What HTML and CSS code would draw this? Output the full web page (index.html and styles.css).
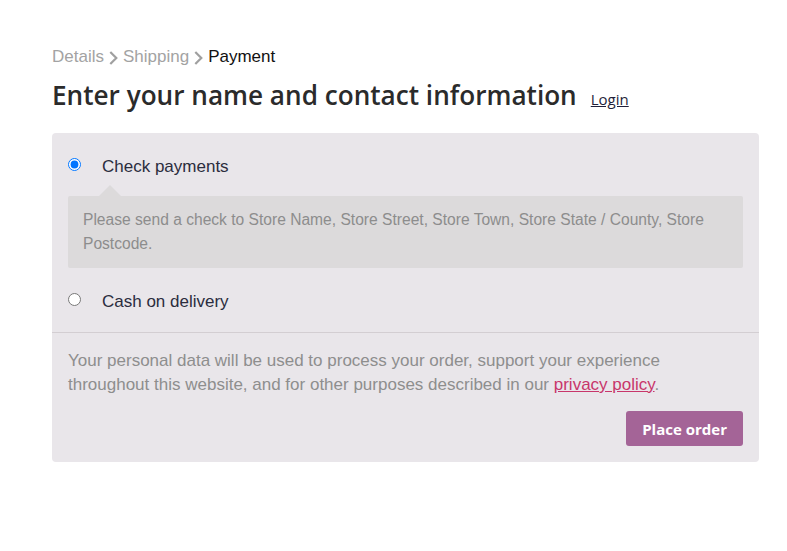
FILE: index.html
```html
<!DOCTYPE html>
<html>
<head>
<meta charset="utf-8">
<link rel="stylesheet" href="styles.css">
</head>
<body>
<div class="page">
  <nav class="crumbs">
    <span class="crumb">Details</span>
    <svg class="chev" viewBox="0 0 9 14" width="9" height="14"><path d="M1.3 1 L7.3 7 L1.3 13" fill="none" stroke="#a0a0a0" stroke-width="2.2"/></svg>
    <span class="crumb">Shipping</span>
    <svg class="chev" viewBox="0 0 9 14" width="9" height="14"><path d="M1.3 1 L7.3 7 L1.3 13" fill="none" stroke="#a0a0a0" stroke-width="2.2"/></svg>
    <span class="crumb current">Payment</span>
  </nav>
  <div class="title-row">
    <h1>Enter your name and contact information</h1>
    <a class="login" href="#">Login</a>
  </div>
  <div class="panel">
    <ul class="methods">
      <li class="method">
        <label class="method-label"><input type="radio" name="pm" checked><span>Check payments</span></label>
        <div class="desc">Please send a check to Store Name, Store Street, Store Town, Store State / County, Store Postcode.</div>
      </li>
      <li class="method">
        <label class="method-label"><input type="radio" name="pm"><span>Cash on delivery</span></label>
      </li>
    </ul>
    <div class="place">
      <p class="privacy">Your personal data will be used to process your order, support your experience throughout this website, and for other purposes described in our <a href="#">privacy policy</a>.</p>
      <div class="actions"><button class="btn">Place order</button></div>
    </div>
  </div>
</div>
</body>
</html>
```
FILE: styles.css
```css
* { box-sizing: border-box; }
body { margin: 0; background: #fff; font-family: "Liberation Sans", Arial, sans-serif; }
.page { padding: 45px 28px 0 52px; }
.crumbs { display: flex; align-items: center; gap: 5px; font-size: 17px; line-height: 24px; color: #a3a3a3; }
.crumbs .current { color: #111; }
.chev { display: block; margin-top: 1px; }
.title-row { display: flex; align-items: baseline; gap: 14px; margin-top: 6px; }
h1 { margin: 0; font-family: "Open Sans", "Noto Sans", sans-serif; font-weight: 600; font-size: 26.15px; line-height: 40px; color: #2b2b2b; letter-spacing: 0; }
.login { font-family: "Open Sans", "Noto Sans", sans-serif; font-size: 15px; color: #1f1f3a; text-decoration: underline; }
.panel { margin-top: 18px; width: 707px; background: #e9e6ea; border-radius: 4px; }
.methods { list-style: none; margin: 0; padding: 0 16px; border-bottom: 1px solid #d3ced2; }
.method { padding-top: 22px; }
.method + .method { padding-top: 22px; padding-bottom: 18px; }
.method-label { display: flex; align-items: flex-start; font-size: 17px; line-height: 24px; color: #2b2d3e; }
.method-label input { margin: 3px 21px 0 0; width: 13px; height: 13px; flex: none; }
.desc { position: relative; margin-top: 17px; background: #dcdadb; border-radius: 2px; padding: 12px 15px; font-size: 15.6px; line-height: 24px; color: #8d8d8d; }
.desc::before { content: ""; position: absolute; left: 31px; top: -11px; border: 11px solid transparent; border-top: 0; border-bottom-color: #dcdadb; }
.place { padding: 16px; }
.privacy { margin: 0; font-size: 17px; line-height: 24px; color: #8e8e8e; }
.privacy a { color: #c8366b; }
.actions { display: flex; justify-content: flex-end; margin-top: 14px; }
.btn { border: 0; border-radius: 3px; background: #a46497; color: #fff; font-family: "Open Sans", "Noto Sans", sans-serif; font-weight: 700; font-size: 15px; height: 35px; padding: 0 16px; }
```
